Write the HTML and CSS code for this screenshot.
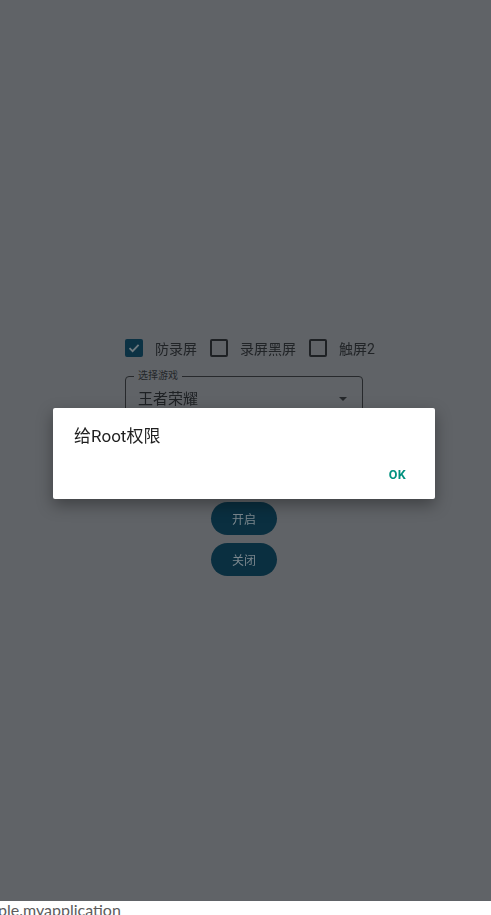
FILE: index.html
```html
<!DOCTYPE html>
<html lang="zh">
<head>
    <meta charset="UTF-8">
    <meta name="viewport" content="width=device-width, initial-scale=1.0">
    <title>My Application</title>
    <link rel="stylesheet" href="styles.css">
</head>
<body>

    <!-- Dim layer behind the dialog -->
    <div class="scrim"></div>

    <!-- Main screen content (colours already dimmed) -->
    <div class="screen">
        <div class="options">
            <label class="option">
                <span class="box checked">
                    <svg width="14" height="14" viewBox="0 0 14 14"><path d="M2.5 7.2 L5.6 10.2 L11.6 3.8" fill="none" stroke="#6f7a80" stroke-width="1.8"/></svg>
                </span>
                <span class="option-text">防录屏</span>
            </label>
            <label class="option">
                <span class="box"></span>
                <span class="option-text">录屏黑屏</span>
            </label>
            <label class="option">
                <span class="box"></span>
                <span class="option-text">触屏2</span>
            </label>
        </div>

        <div class="field">
            <span class="field-label">选择游戏</span>
            <span class="field-value">王者荣耀</span>
            <span class="arrow"></span>
        </div>

        <div class="actions">
            <button class="pill">开启</button>
            <button class="pill">关闭</button>
        </div>
    </div>

    <div class="toast">ple.myapplication</div>

    <div class="dialog">
        <h3>给Root权限</h3>
        <div class="dialog-buttons">
            <button class="text-btn">OK</button>
        </div>
    </div>

</body>
</html>
```

FILE: styles.css
```css
/* General Page Styles */
body, html {
    margin: 0;
    height: 100%;
    background-color: #ffffff;
    font-family: Roboto, "Noto Sans CJK SC", sans-serif;
    overflow: hidden;
}

.scrim {
    position: fixed;
    left: 0;
    top: 0;
    width: 100%;
    height: 901px;
    background-color: #606367;
    z-index: 1;
}

/* Content column */
.screen {
    position: relative;
    z-index: 2;
    display: flex;
    flex-direction: column;
    align-items: center;
    padding-top: 336px;
}

.options {
    display: flex;
    align-items: center;
    height: 24px;
    margin-left: 9px;
}

.option {
    display: flex;
    align-items: center;
    margin-right: 13px;
}

.option:last-child {
    margin-right: 0;
}

.box {
    width: 18px;
    height: 18px;
    box-sizing: border-box;
    border: 2px solid #1e2124;
    border-radius: 2px;
    display: flex;
    align-items: center;
    justify-content: center;
}

.box.checked {
    background-color: #0c3244;
    border-color: #0c3244;
}

.option-text {
    margin-left: 12px;
    font-size: 14px;
    color: #212427;
}

/* Outlined dropdown field */
.field {
    position: relative;
    width: 238px;
    height: 48px;
    margin-top: 16px;
    margin-left: -3px;
    box-sizing: border-box;
    border: 1px solid #27292c;
    border-radius: 4px;
    display: flex;
    align-items: center;
    padding-left: 12px;
}

.field-label {
    position: absolute;
    top: -8px;
    left: 8px;
    padding: 0 4px;
    font-size: 10px;
    color: #24272a;
    background-color: #606367;
    line-height: 14px;
}

.field-value {
    font-size: 15px;
    color: #1e2124;
    margin-top: -5px;
}

.arrow {
    position: absolute;
    right: 15px;
    top: 20px;
    width: 0;
    height: 0;
    border-left: 4px solid transparent;
    border-right: 4px solid transparent;
    border-top: 4px solid #25282b;
}

.actions {
    display: flex;
    flex-direction: column;
    align-items: center;
    margin-top: 78px;
    margin-left: -3px;
}

.pill {
    width: 66px;
    height: 33px;
    margin-bottom: 8px;
    border: none;
    border-radius: 17px;
    background-color: #0a2f40;
    color: #7b878d;
    font-family: Roboto, "Noto Sans CJK SC", sans-serif;
    font-size: 12px;
    padding: 0;
}

/* Package name peeking out at the bottom */
.toast {
    position: absolute;
    left: -2px;
    top: 901px;
    font-size: 16px;
    line-height: 18px;
    color: #5c5c5c;
    font-family: Lato, "Noto Sans", sans-serif;
    z-index: 0;
}

/* Dialog */
.dialog {
    position: absolute;
    left: 53px;
    top: 408px;
    width: 382px;
    height: 91px;
    box-sizing: border-box;
    background-color: #ffffff;
    border-radius: 2px;
    box-shadow: 0 6px 16px rgba(0, 0, 0, 0.35);
    padding: 16px 21px 0 21px;
    z-index: 5;
}

.dialog h3 {
    margin: 0;
    font-size: 17px;
    font-weight: 400;
    color: #1f1f1f;
    line-height: 24px;
}

.dialog-buttons {
    display: flex;
    justify-content: flex-end;
    margin-top: 19px;
}

.text-btn {
    background: none;
    border: none;
    color: #00917f;
    font-family: Roboto, sans-serif;
    font-size: 12.5px;
    font-weight: 700;
    padding: 0;
    margin-right: 8px;
    letter-spacing: 0.3px;
}
```
